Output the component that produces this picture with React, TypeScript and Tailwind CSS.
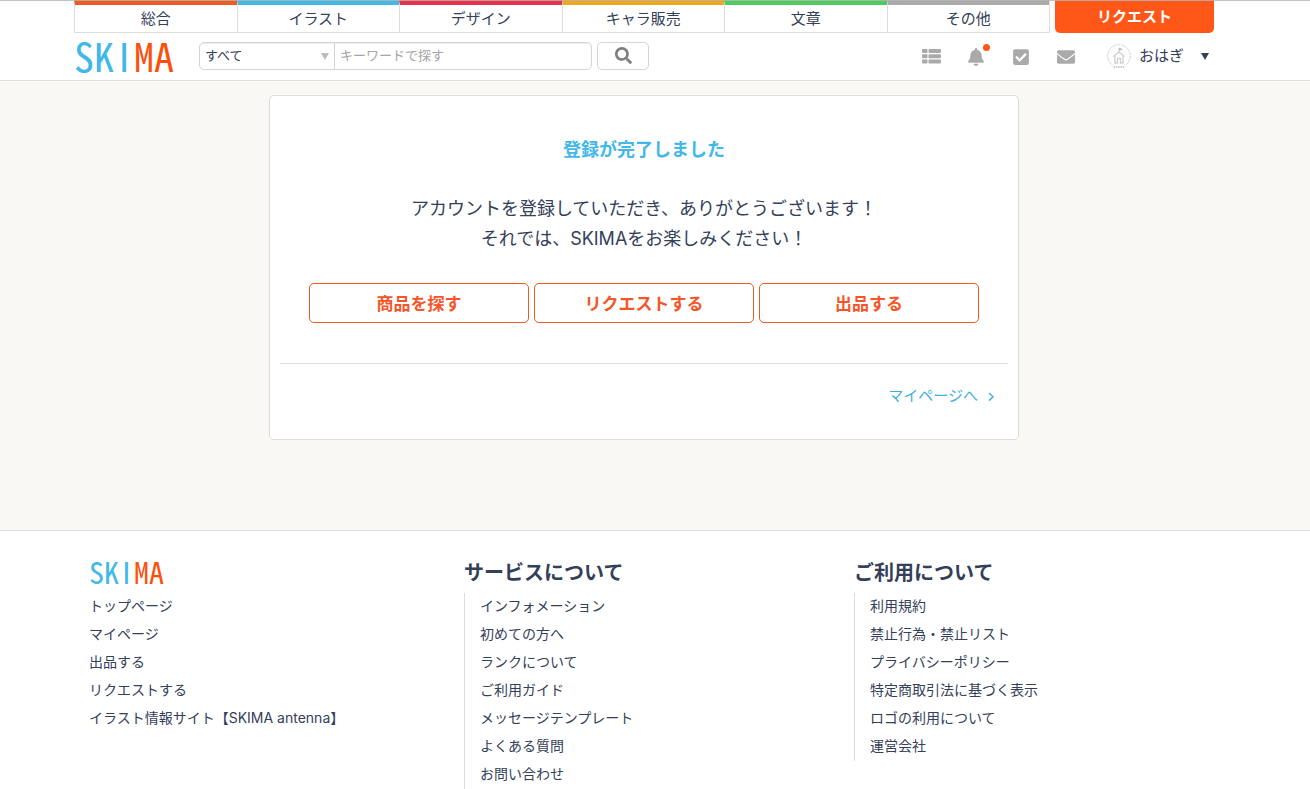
import type { ReactNode } from "react";
import { FaBell, FaCheckSquare, FaEnvelope, FaSearch } from "react-icons/fa";
import { clsx } from "clsx";

const categories = [
  { label: "総合", color: "border-t-[#ee5a24]" },
  { label: "イラスト", color: "border-t-[#42b8e3]" },
  { label: "デザイン", color: "border-t-[#e8304c]" },
  { label: "キャラ販売", color: "border-t-[#f0a71c]" },
  { label: "文章", color: "border-t-[#4fcb5c]" },
  { label: "その他", color: "border-t-[#aaaaaa]" },
];

const siteLinks = ["トップページ", "マイページ", "出品する", "リクエストする", "イラスト情報サイト【SKIMA antenna】"];

const serviceLinks = [
  "インフォメーション",
  "初めての方へ",
  "ランクについて",
  "ご利用ガイド",
  "メッセージテンプレート",
  "よくある質問",
  "お問い合わせ",
];

const usageLinks = [
  "利用規約",
  "禁止行為・禁止リスト",
  "プライバシーポリシー",
  "特定商取引法に基づく表示",
  "ロゴの利用について",
  "運営会社",
];

// Half-width Latin forms give the narrow letters; the I keeps its plain form, without serifs.
function Wordmark({ className }: { className: string }) {
  return (
    <a
      href="#"
      className={clsx(
        "block whitespace-nowrap font-['Noto_Sans_CJK_JP',sans-serif] text-[#42b8e8] [font-feature-settings:'hwid']",
        className,
      )}
    >
      SK<span className="inline-block w-[0.5em] text-center [font-feature-settings:normal]">I</span>
      <span className="text-[#fb4f0c]">MA</span>
    </a>
  );
}

function Avatar() {
  return (
    <svg viewBox="0 0 24 26" className="h-[26px] w-6" fill="none" stroke="#cfcfcf" aria-hidden="true">
      <circle cx="12" cy="12" r="11.3" strokeWidth="1" strokeDasharray="2 .6" />
      <path d="M6.500 12.500 12 8l5.500 4.500M8 12v7h2.500v-4.500h3V19H16v-7" strokeWidth="1.300" />
      <path d="M12 8V4" strokeWidth="1" />
      <path d="M12 3.500 16 5.200 12 7z" fill="#bdbdbd" stroke="none" />
      <path d="M5.500 21h13v4h-13z" fill="#fff" stroke="none" />
      <path d="M6.500 23h11" strokeWidth="2" strokeDasharray="1.500 .8" />
    </svg>
  );
}

function IconButton({ label, children }: { label: string; children: ReactNode }) {
  return (
    <button type="button" aria-label={label} className="relative flex w-[19px] justify-center text-[#aaaaaa]">
      {children}
    </button>
  );
}

function LinkList({ links, ruled }: { links: string[]; ruled?: boolean }) {
  return (
    <ul className={clsx(ruled && "border-l border-[#dddddd] pl-[15px]")}>
      {links.map((link) => (
        <li key={link} className="h-7 text-sm leading-[26px]">
          <a href="#">{link}</a>
        </li>
      ))}
    </ul>
  );
}

export default function App() {
  return (
    <div className="min-h-screen bg-[#f9f8f4] font-['Inter','Noto_Sans_CJK_JP',sans-serif] text-[#34405a]">
      <header className="relative border-b border-[#dddddd] bg-white pr-[22px] before:absolute before:inset-x-0 before:top-0 before:h-px before:bg-[#b5b5b5]/80">
        <div className="mx-auto max-w-[1140px]">
          <nav aria-label="カテゴリー" className="flex h-[33px] gap-[5px]">
            <ul className="flex flex-1 border-r border-[#dddddd]">
              {categories.map((category) => (
                <li key={category.label} className="flex-1">
                  <a
                    href="#"
                    className={clsx(
                      "flex h-full items-center justify-center border-t-[5px] border-b border-l border-b-[#dddddd] border-l-[#dddddd] text-[15px] leading-6",
                      category.color,
                    )}
                  >
                    {category.label}
                  </a>
                </li>
              ))}
            </ul>
            <a
              href="#"
              className="flex w-[159px] items-center justify-center rounded-b-[5px] bg-[#ff5718] text-[15px] leading-6 font-bold text-white"
            >
              リクエスト
            </a>
          </nav>

          <div className="flex h-[47px] items-center">
            <Wordmark className="w-[125px] pb-1 text-[40px] leading-10" />
            <form className="flex gap-[5px] pb-[2px]">
              <div className="flex h-7 rounded-[5px] border border-[#d5d5d5] bg-white text-[13px] shadow-[inset_0_1px_1px_#eeeeee]">
                <div className="relative flex w-[134px]">
                  <select aria-label="カテゴリー" className="w-full appearance-none bg-transparent pl-[5px]">
                    <option>すべて</option>
                  </select>
                  <svg viewBox="0 0 8 7" className="absolute top-[10px] right-[5px] h-[7px] w-2 fill-[#bbbbbb]" aria-hidden="true">
                    <path d="M0 0h8L4 7z" />
                  </svg>
                </div>
                <input
                  type="text"
                  aria-label="キーワード"
                  placeholder="キーワードで探す"
                  className="w-[257px] border-l border-[#d5d5d5] bg-transparent px-[5px] outline-none placeholder:text-[#a5a5a5]"
                />
              </div>
              <button
                type="submit"
                aria-label="検索"
                className="flex h-7 w-[52px] items-center justify-center rounded-[5px] border border-[#d5d5d5] bg-white text-[#808080]"
              >
                <FaSearch size={17} />
              </button>
            </form>

            <div className="ml-auto flex items-center gap-[26px]">
              <IconButton label="一覧">
                <svg viewBox="0 0 19 15" className="h-[15px] w-[19px] fill-current" aria-hidden="true">
                  <rect x="0" y="0" width="5.500" height="4" rx="1" />
                  <rect x="6.500" y="0" width="12.500" height="4" rx="1" />
                  <rect x="0" y="5.300" width="5.500" height="4" rx="1" />
                  <rect x="6.500" y="5.300" width="12.500" height="4" rx="1" />
                  <rect x="0" y="10.600" width="5.500" height="4" rx="1" />
                  <rect x="6.500" y="10.600" width="12.500" height="4" rx="1" />
                </svg>
              </IconButton>
              <IconButton label="お知らせ">
                <FaBell size={18} />
                <span className="absolute -top-1 -right-1 size-[7px] rounded-full bg-[#ff5718]" />
              </IconButton>
              <IconButton label="やること">
                <FaCheckSquare size={18} />
              </IconButton>
              <IconButton label="メッセージ">
                <FaEnvelope size={18} />
              </IconButton>
              <button type="button" className="ml-[5px] flex items-center gap-2 pr-[5px] text-[15px] leading-6">
                <Avatar />
                <span className="pb-[2px]">おはぎ</span>
                <svg viewBox="0 0 8 7" className="ml-[9px] h-[7px] w-2 fill-current" aria-hidden="true">
                  <path d="M0 0h8L4 7z" />
                </svg>
              </button>
            </div>
          </div>
        </div>
      </header>

      <main className="pt-[14px] pr-[22px] pb-[90px]">
        <section className="mx-auto max-w-[750px] rounded-[5px] border border-[#dddddd] bg-white px-[10px] pt-10 pb-[31px] text-center">
          <h1 className="text-lg leading-7 font-bold text-[#42b8e8]">登録が完了しました</h1>
          <p className="mt-[30px] text-lg leading-[30px]">
            アカウントを登録していただき、ありがとうございます！
            <br />
            それでは、SKIMAをお楽しみください！
          </p>
          <div className="mx-[29px] mt-[29px] grid grid-cols-3 gap-[5px]">
            {["商品を探す", "リクエストする", "出品する"].map((label) => (
              <button
                key={label}
                type="button"
                className="h-10 rounded-[5px] border border-[#ee5a24] pt-1 text-[17px] font-bold text-[#f4562a]"
              >
                {label}
              </button>
            ))}
          </div>
          <div className="mt-10 flex justify-end border-t border-[#dddddd] pt-5 pr-[14px]">
            <a href="#" className="flex items-center gap-[10px] text-[15px] leading-6 text-[#42b0e0]">
              マイページへ
              <svg viewBox="0 0 6 10" className="h-[10px] w-[6px]" fill="none" stroke="currentColor" strokeWidth="1.500" aria-hidden="true">
                <path d="m1 2 4 3.800-4 3.800" />
              </svg>
            </a>
          </div>
        </section>
      </main>

      <footer className="border-t border-[#dddddd] bg-white pt-6 pr-[22px]">
        <div className="mx-auto grid max-w-[1140px] grid-cols-[375fr_390fr_345fr] px-[15px]">
          <div>
            <Wordmark className="h-[38px] text-[30px] leading-8" />
            <LinkList links={siteLinks} />
          </div>
          <div>
            <h2 className="h-[38px] text-xl leading-9 font-bold">サービスについて</h2>
            <LinkList links={serviceLinks} ruled />
          </div>
          <div>
            <h2 className="h-[38px] text-xl leading-9 font-bold">ご利用について</h2>
            <LinkList links={usageLinks} ruled />
          </div>
        </div>
      </footer>
    </div>
  );
}
